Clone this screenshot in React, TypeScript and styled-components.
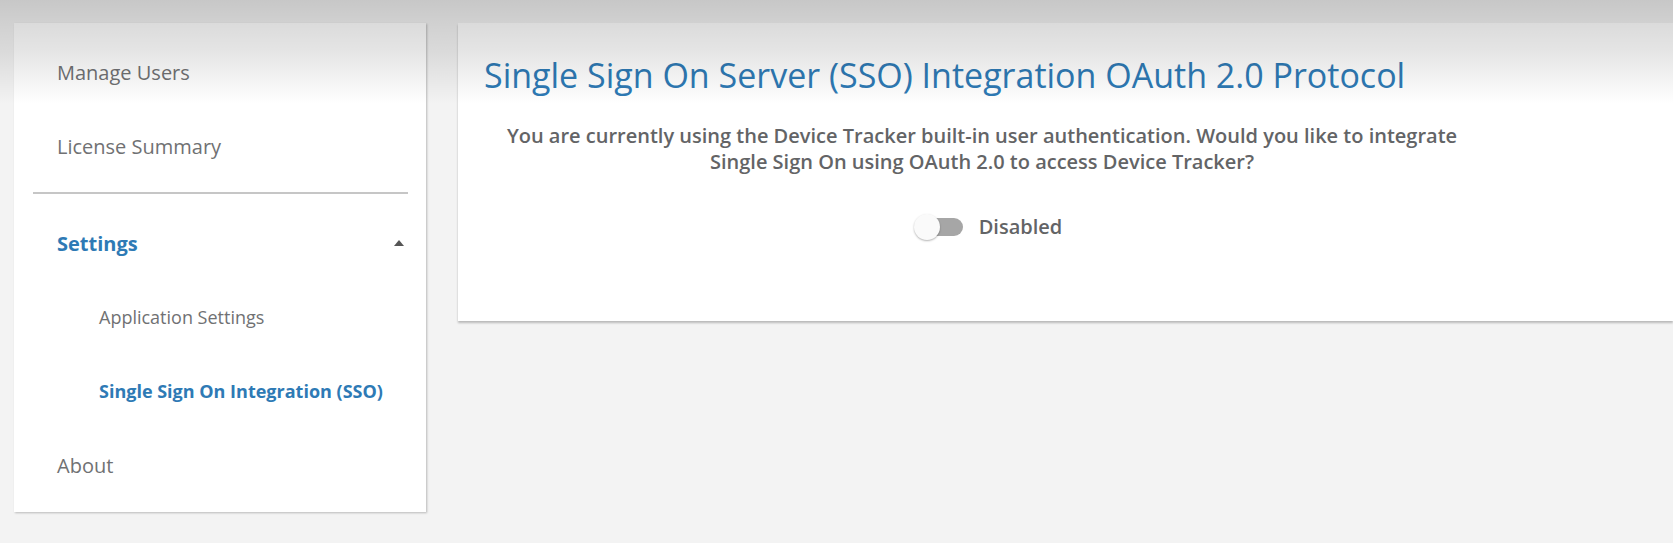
import { useState } from "react";
import styled, { createGlobalStyle } from "styled-components";

const GlobalStyle = createGlobalStyle`
  *, *::before, *::after { box-sizing: border-box; }
  html { background: #f3f3f3; }
  body {
    margin: 0;
    overflow-x: hidden;
    font-family: "Segoe UI", "Open Sans", "Noto Sans", sans-serif;
    color: #636466;
  }
`;

const Page = styled.div`
  position: relative;
  min-height: 100vh;
  display: flex;
  align-items: flex-start;
  gap: 32px;
  padding: 23px 0 31px 14px;
`;

/* Soft shadow cast by the application header over the top of the page. */
const HeaderShade = styled.div`
  position: absolute;
  inset: 0 0 auto;
  height: 104px;
  pointer-events: none;
  background: linear-gradient(
    rgba(0, 0, 0, 0.18) 0px,
    rgba(0, 0, 0, 0.14) 24px,
    rgba(0, 0, 0, 0.1) 52px,
    rgba(0, 0, 0, 0.04) 84px,
    rgba(0, 0, 0, 0) 104px
  );
`;

const Sidebar = styled.nav`
  flex: 0 0 412px;
  padding: 12px 0 10px;
  background: #fff;
  box-shadow: 1px 1px 2px rgba(0, 0, 0, 0.24);
`;

const NavList = styled.ul`
  list-style: none;
  margin: 0;
  padding: 0;
`;

const NavLink = styled.a<{ $active?: boolean; $nested?: boolean }>`
  display: flex;
  align-items: center;
  height: 74px;
  padding-left: ${(p) => (p.$nested ? 85 : 43)}px;
  font-size: ${(p) => (p.$nested ? 18 : 20)}px;
  font-weight: ${(p) => (p.$active ? 700 : 400)};
  color: ${(p) => (p.$active ? "#2e7ab5" : "#707173")};
  text-decoration: none;
  white-space: nowrap;
`;

const NavToggle = styled.button`
  display: flex;
  align-items: center;
  justify-content: space-between;
  width: 100%;
  height: 74px;
  padding: 0 22px 0 43px;
  border: 0;
  background: none;
  font: inherit;
  font-size: 20px;
  font-weight: 700;
  color: #2e7ab5;
  cursor: pointer;
`;

const Caret = styled.svg<{ $open: boolean }>`
  width: 10px;
  height: 6px;
  fill: #555;
  transform: ${(p) => (p.$open ? "none" : "rotate(180deg)")};
`;

const Divider = styled.hr`
  height: 2px;
  margin: 9px 18px 12px 19px;
  border: 0;
  background: #c6c6c6;
`;

const Card = styled.main`
  flex: 1;
  min-width: 0;
  padding: 26px 26px 80px;
  background: #fff;
  box-shadow: 0 2px 2px rgba(0, 0, 0, 0.24);
`;

const Content = styled.div`
  max-width: 996px;
`;

const Title = styled.h1`
  margin: 0;
  font-size: 34px;
  line-height: 52px;
  font-weight: 400;
  color: #2e7ab5;
`;

const Description = styled.p`
  margin: 22px 0 38px;
  padding: 0 16px;
  font-size: 20px;
  line-height: 26px;
  font-weight: 600;
  text-align: center;
`;

const SwitchLabel = styled.label`
  display: flex;
  align-items: center;
  justify-content: center;
  gap: 16px;
  padding-left: 14px;
  font-size: 20px;
  line-height: 28px;
  font-weight: 600;
  cursor: pointer;
`;

const Switch = styled.input`
  appearance: none;
  display: flex;
  align-items: center;
  width: 47px;
  height: 18px;
  margin: 0;
  border-radius: 9px;
  background: #a6a6a6;
  cursor: pointer;

  &::before {
    content: "";
    width: 26px;
    height: 26px;
    margin-left: -2px;
    flex: none;
    border-radius: 50%;
    background: #fafafa;
    box-shadow: 0 1px 2px rgba(0, 0, 0, 0.3);
  }

  &:checked {
    justify-content: flex-end;
    background: #8fbbdd;
  }

  &:checked::before {
    background: #2e7ab5;
  }
`;

export default function App() {
  const [open, setOpen] = useState(true);
  const [enabled, setEnabled] = useState(false);

  return (
    <>
      <GlobalStyle />
      <Page>
        <Sidebar>
          <NavList>
            <li><NavLink href="#users">Manage Users</NavLink></li>
            <li><NavLink href="#license">License Summary</NavLink></li>
          </NavList>
          <Divider />
          <NavList>
            <li>
              <NavToggle type="button" aria-expanded={open} onClick={() => setOpen(!open)}>
                Settings
                <Caret $open={open} viewBox="0 0 10 6" aria-hidden="true">
                  <path d="M5 0 10 6H0z" />
                </Caret>
              </NavToggle>
              {open && (
                <NavList>
                  <li><NavLink $nested href="#application">Application Settings</NavLink></li>
                  <li>
                    <NavLink $nested $active href="#sso" aria-current="page">
                      Single Sign On Integration (SSO)
                    </NavLink>
                  </li>
                </NavList>
              )}
            </li>
            <li><NavLink href="#about">About</NavLink></li>
          </NavList>
        </Sidebar>
        <Card>
          <Content>
            <Title>Single Sign On Server (SSO) Integration OAuth 2.0 Protocol</Title>
            <Description>
              You are currently using the Device Tracker built-in user authentication. Would you
              like to integrate Single Sign On using OAuth 2.0 to access Device Tracker?
            </Description>
            <SwitchLabel>
              <Switch
                type="checkbox"
                role="switch"
                checked={enabled}
                onChange={(e) => setEnabled(e.target.checked)}
              />
              {enabled ? "Enabled" : "Disabled"}
            </SwitchLabel>
          </Content>
        </Card>
        <HeaderShade />
      </Page>
    </>
  );
}
